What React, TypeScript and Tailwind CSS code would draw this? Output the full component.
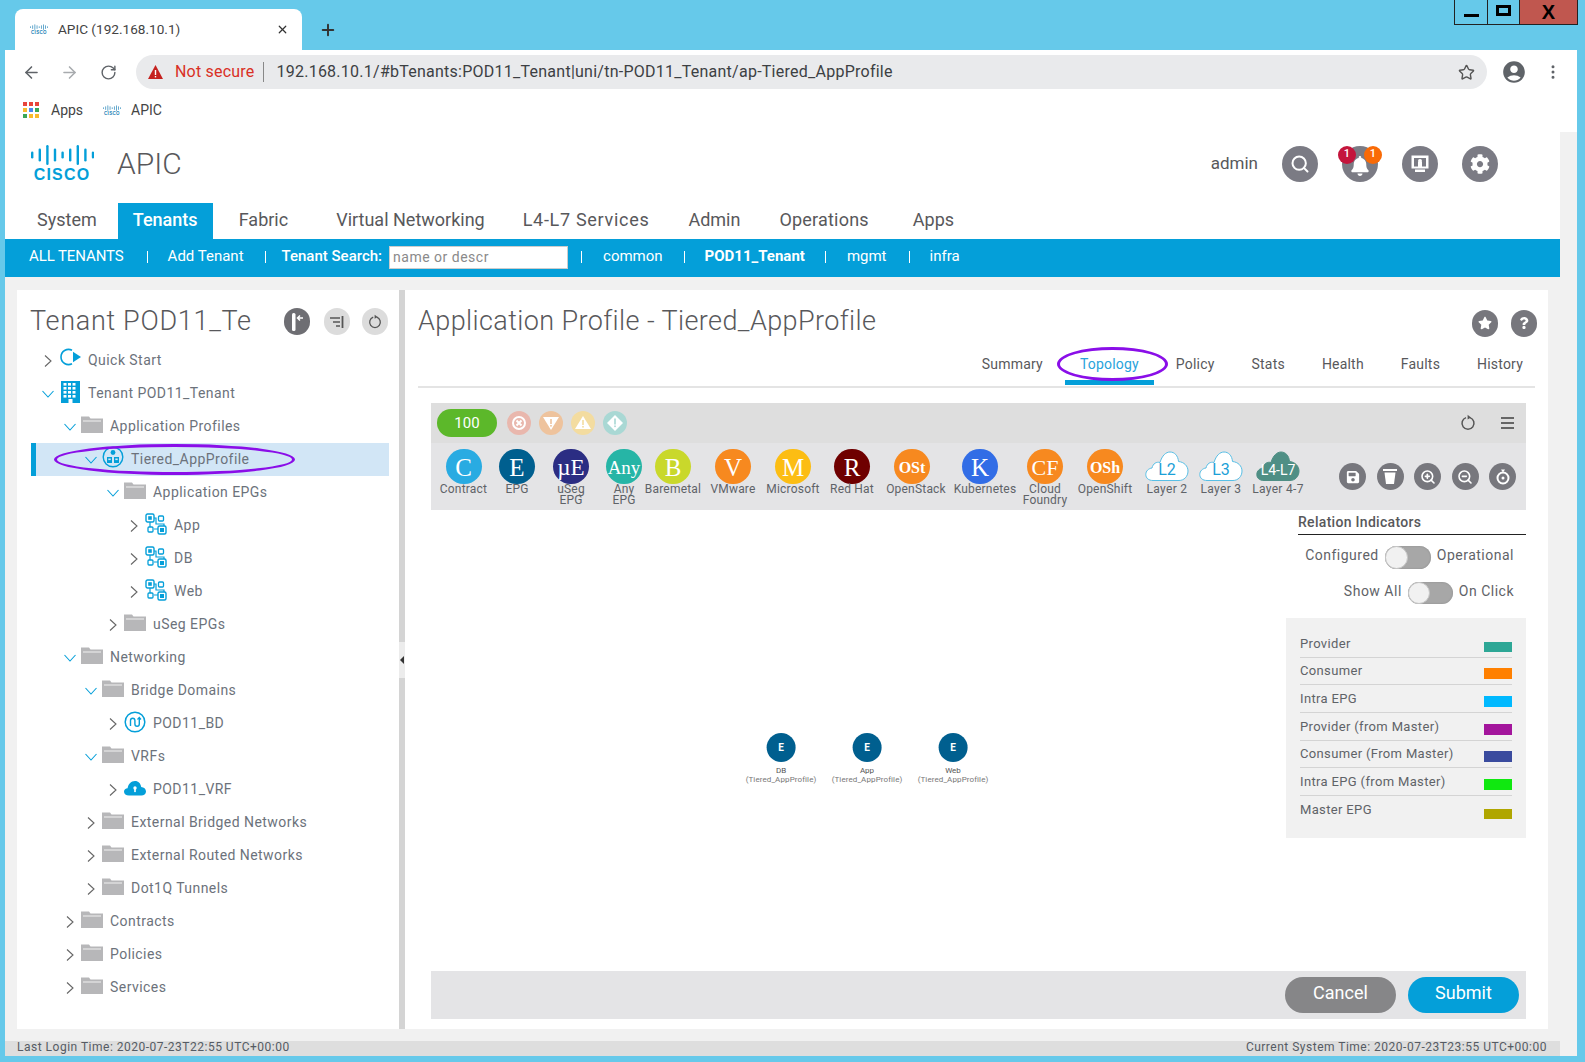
import React from "react";
import { ArrowLeft, ArrowRight, RotateCw, Star, EllipsisVertical, Plus, X, Search, ZoomIn, ZoomOut } from "lucide-react";
import { FaCog, FaBell, FaSave, FaStar, FaQuestion } from "react-icons/fa";
import { MdAccountCircle } from "react-icons/md";

const BARS = [7, 13, 20, 13, 7, 13, 20, 13, 7];

function CiscoMark({ w, h, color }: { w: number; h: number; color: string }) {
  return (
    <svg width={w} height={h} viewBox="0 0 64 37">
      {BARS.map((b, i) => (
        <rect key={i} x={i * 7.6 + 1} y={10 - b / 2} width="2.4" height={b} rx="1.2" fill={color} />
      ))}
      <text x="32" y="35" textAnchor="middle" fontFamily="Liberation Sans, sans-serif" fontWeight="700" fontSize="16" letterSpacing="1.2" fill={color}>
        CISCO
      </text>
    </svg>
  );
}

function Refresh({ size = 18, color = "#555" }: { size?: number; color?: string }) {
  return (
    <svg width={size} height={size} viewBox="0 0 18 18" fill="none">
      <path d="M7 3.6A6 6 0 1 0 11 3.6" stroke={color} strokeWidth="1.5" />
      <path d="M8.6 0.8 L12 3.4 L8.6 5.4Z" fill={color} />
    </svg>
  );
}

function Folder() {
  return (
    <svg width="22" height="17" viewBox="0 0 22 17" className="mb-1">
      <path d="M0 0.5H8L9.5 2.5H22V17H0Z" fill="#b7b7b9" />
      <rect x="2" y="4.5" width="18" height="1" fill="#f2f2f2" />
    </svg>
  );
}

function EpgIcon() {
  return (
    <svg width="22" height="22" viewBox="0 0 22 22" fill="none" className="mb-1">
      <rect x="1" y="1" width="8" height="8" rx="1.5" stroke="#049fd9" strokeWidth="1.4" />
      <rect x="3.2" y="3.2" width="3.6" height="3.6" fill="#049fd9" />
      <rect x="13.5" y="3" width="5" height="5" rx="1" stroke="#049fd9" strokeWidth="1.3" />
      <rect x="3" y="14" width="5" height="5" rx="1" stroke="#049fd9" strokeWidth="1.3" />
      <rect x="13" y="13" width="8" height="8" rx="1.5" stroke="#049fd9" strokeWidth="1.4" />
      <rect x="15" y="15" width="4" height="4" fill="#049fd9" />
      <path d="M9 5H11V11H19V13M5 9V14M9 16H13" stroke="#049fd9" strokeWidth="1.2" />
    </svg>
  );
}

function AppProfileIcon() {
  return (
    <svg width="22" height="22" viewBox="0 0 22 22" fill="none" className="mb-[6px]">
      <circle cx="11" cy="11" r="9.8" stroke="#049fd9" strokeWidth="1.4" />
      <circle cx="11" cy="6.5" r="2.4" fill="#049fd9" />
      <rect x="5" y="11" width="5" height="6" fill="#049fd9" />
      <rect x="12" y="11" width="5" height="6" fill="#049fd9" />
      <rect x="6.3" y="12.5" width="2.4" height="1.6" fill="#d2e6f6" />
      <rect x="13.3" y="12.5" width="2.4" height="1.6" fill="#d2e6f6" />
    </svg>
  );
}

function BdIcon() {
  return (
    <svg width="22" height="22" viewBox="0 0 22 22" fill="none" className="mb-1">
      <circle cx="11" cy="11" r="9.8" stroke="#049fd9" strokeWidth="1.5" />
      <path d="M6.5 15V9.5a2.2 2.2 0 0 1 4.4 0V13a2.2 2.2 0 0 0 4.4 0V7" stroke="#049fd9" strokeWidth="1.4" />
      <path d="M13.5 8.5L15.3 6.5L17 8.5" stroke="#049fd9" strokeWidth="1.2" />
    </svg>
  );
}

function VrfIcon() {
  return (
    <svg width="22" height="16" viewBox="0 0 22 16" className="mb-1">
      <path d="M5 15.5C2 15.5 0 14 0 11.8 0 9.8 1.6 8.4 3.6 8.3 4 4.5 7 1 11 1c3.4 0 5.8 2.6 6.2 6 2.6.2 4.8 1.8 4.8 4.4 0 2.6-2.2 4.1-4.6 4.1Z" fill="#049fd9" />
      <circle cx="11" cy="8" r="1.7" fill="#fff" />
      <rect x="10.2" y="8.5" width="1.6" height="3.6" fill="#fff" />
    </svg>
  );
}

function TenantIcon() {
  return (
    <svg width="19" height="22" viewBox="0 0 19 22" className="mb-1 ml-[2px]">
      <rect width="19" height="22" fill="#049fd9" />
      {[2.5, 7, 11.5].map((x) =>
        [2, 6, 10, 14].map((y) => <rect key={`${x}-${y}`} x={x} y={y} width="3" height="2.6" fill="#fff" />)
      )}
      <rect x="7.5" y="18" width="4" height="4" fill="#fff" />
    </svg>
  );
}

function QuickIcon() {
  return (
    <svg width="22" height="18" viewBox="0 0 22 18" fill="none" className="mb-[7px]">
      <path d="M13 2.2A7.6 7.6 0 1 0 13 15.8" stroke="#049fd9" strokeWidth="1.6" />
      <path d="M14 3.8L22 9L14 14.2Z" fill="#049fd9" />
    </svg>
  );
}

const ICONS: Record<string, React.ReactNode> = {
  folder: <Folder />,
  epg: <EpgIcon />,
  ap: <AppProfileIcon />,
  bd: <BdIcon />,
  vrf: <VrfIcon />,
  tenant: <TenantIcon />,
  quick: <QuickIcon />,
};

const TREE: { label: string; pad: string; open: boolean; icon: string; selected?: boolean }[] = [
  { label: "Quick Start", pad: "pl-[11px]", open: false, icon: "quick" },
  { label: "Tenant POD11_Tenant", pad: "pl-[11px]", open: true, icon: "tenant" },
  { label: "Application Profiles", pad: "pl-[33px]", open: true, icon: "folder" },
  { label: "Tiered_AppProfile", pad: "pl-[49px]", open: true, icon: "ap", selected: true },
  { label: "Application EPGs", pad: "pl-[76px]", open: true, icon: "folder" },
  { label: "App", pad: "pl-[97px]", open: false, icon: "epg" },
  { label: "DB", pad: "pl-[97px]", open: false, icon: "epg" },
  { label: "Web", pad: "pl-[97px]", open: false, icon: "epg" },
  { label: "uSeg EPGs", pad: "pl-[76px]", open: false, icon: "folder" },
  { label: "Networking", pad: "pl-[33px]", open: true, icon: "folder" },
  { label: "Bridge Domains", pad: "pl-[54px]", open: true, icon: "folder" },
  { label: "POD11_BD", pad: "pl-[76px]", open: false, icon: "bd" },
  { label: "VRFs", pad: "pl-[54px]", open: true, icon: "folder" },
  { label: "POD11_VRF", pad: "pl-[76px]", open: false, icon: "vrf" },
  { label: "External Bridged Networks", pad: "pl-[54px]", open: false, icon: "folder" },
  { label: "External Routed Networks", pad: "pl-[54px]", open: false, icon: "folder" },
  { label: "Dot1Q Tunnels", pad: "pl-[54px]", open: false, icon: "folder" },
  { label: "Contracts", pad: "pl-[33px]", open: false, icon: "folder" },
  { label: "Policies", pad: "pl-[33px]", open: false, icon: "folder" },
  { label: "Services", pad: "pl-[33px]", open: false, icon: "folder" },
];

function Chevron({ open }: { open: boolean }) {
  return open ? (
    <svg width="12" height="12" viewBox="0 0 12 12" fill="none">
      <path d="M0.5 3L6 9L11.5 3" stroke="#049fd9" strokeWidth="1.1" />
    </svg>
  ) : (
    <svg width="12" height="12" viewBox="0 0 12 12" fill="none">
      <path d="M3 0.5L9 6L3 11.5" stroke="#666" strokeWidth="1.1" />
    </svg>
  );
}

const PALETTE: { t: string; label: string[]; box: string; bg: string; text: string; lab?: string }[] = [
  { t: "C", label: ["Contract"], box: "w-[65px]", bg: "bg-[#29abe2]", text: "text-[25px]" },
  { t: "E", label: ["EPG"], box: "w-[42px]", bg: "bg-[#005f8f]", text: "text-[25px]" },
  { t: "µE", label: ["uSeg", "EPG"], box: "w-[66px]", bg: "bg-[#2b2d83]", text: "text-[23px]" },
  { t: "Any", label: ["Any", "EPG"], box: "w-[40px]", bg: "bg-[#26b5a6]", text: "text-[19px]" },
  { t: "B", label: ["Baremetal"], box: "w-[58px]", bg: "bg-[#c9d82b]", text: "text-[25px]" },
  { t: "V", label: ["VMware"], box: "w-[62px]", bg: "bg-[#f7891f]", text: "text-[25px]" },
  { t: "M", label: ["Microsoft"], box: "w-[58px]", bg: "bg-[#fcbd13]", text: "text-[25px]" },
  { t: "R", label: ["Red Hat"], box: "w-[60px]", bg: "bg-[#6f0000]", text: "text-[25px]" },
  { t: "OSt", label: ["OpenStack"], box: "w-[60px]", bg: "bg-[#f7891f]", text: "text-[16px] font-bold", lab: "ml-2" },
  { t: "K", label: ["Kubernetes"], box: "w-[76px]", bg: "bg-[#326de6]", text: "text-[25px]", lab: "ml-[10px]" },
  { t: "CF", label: ["Cloud", "Foundry"], box: "w-[54px]", bg: "bg-[#f7891f]", text: "text-[22px]" },
  { t: "OSh", label: ["OpenShift"], box: "w-[66px]", bg: "bg-[#f7891f]", text: "text-[16px] font-bold" },
];

function Cloud({ t, filled }: { t: string; filled?: boolean }) {
  return (
    <div className="relative w-[44px] h-[35px]">
      <svg width="44" height="31" viewBox="0 0 44 31" className="mt-[2px]">
        <path
          d="M8 29.5C3.5 29.5 .8 27 .8 23.5 .8 20 3.5 17.5 7 17c1-4.5 4.5-6.5 8-5.5C17 4.5 21 1 25 1c4.5 0 8 3.5 8.5 9.5 5.5.5 9.5 4.5 9.5 9.5 0 5.500-4 9.500-9 9.500Z"
          fill={filled ? "#4f8f85" : "#fff"}
          stroke={filled ? "#4f8f85" : "#58bfe6"}
          strokeWidth="1"
        />
      </svg>
      <span className={`absolute inset-x-0 bottom-[4px] text-center leading-[20px] whitespace-nowrap ${filled ? "text-[14px] text-white" : "text-[16px] text-[#1ba0d7]"}`}>
        {t}
      </span>
    </div>
  );
}

const LEGEND: [string, string, string][] = [
  ["Provider", "bg-[#2ea796]", "h-[10px]"],
  ["Consumer", "bg-[#ff8000]", "h-[11px]"],
  ["Intra EPG", "bg-[#00b9ff]", "h-[11px]"],
  ["Provider (from Master)", "bg-[#a3159c]", "h-[11px]"],
  ["Consumer (From Master)", "bg-[#3a4b9e]", "h-[11px]"],
  ["Intra EPG (from Master)", "bg-[#10e810]", "h-[11px]"],
  ["Master EPG", "bg-[#b0a600]", "h-[10px]"],
];

function Toggle({ wide }: { wide?: boolean }) {
  return (
    <span className={`flex items-center rounded-full bg-[#a7a7a7] shadow-[inset_0_0_2px_#888] ${wide ? "w-[46px] h-[23px]" : "w-[45px] h-[22px]"}`}>
      <span className={`rounded-full bg-[#f1f1f1] border border-[#c6c6c6] ${wide ? "w-[23px] h-[23px]" : "w-[22px] h-[22px]"}`} />
    </span>
  );
}

function Node({ name, pos }: { name: string; pos: string }) {
  return (
    <div className={`absolute top-[223px] -translate-x-1/2 flex flex-col items-center ${pos}`}>
      <span className="w-[29px] h-[29px] rounded-full bg-[#005f8f] text-white flex items-center justify-center text-[10px] font-bold">E</span>
      <span className="text-[8px] leading-[9px] text-[#555] mt-[4px]">{name}</span>
      <span className="text-[8px] leading-[9px] text-[#777] tracking-[0.1px] whitespace-nowrap">(Tiered_AppProfile)</span>
    </div>
  );
}

function Sep({ m }: { m: string }) {
  return <span className={`w-px h-[12px] mt-[2px] bg-white ${m}`} />;
}

export default function App() {
  const font = { fontFamily: "Roboto, 'Liberation Sans', sans-serif" };
  return (
    <div className="w-[1585px] h-[1062px] bg-[#66c9ea] overflow-hidden flex flex-col pb-[6px]" style={font}>
      {/* window tabs */}
      <div className="h-[50px] shrink-0 flex items-start pl-[15px]">
        <div className="mt-[9px] w-[287px] h-[41px] bg-white rounded-t-lg flex items-center pl-[15px] pr-[13px]">
          <CiscoMark w={18} h={15} color="#1b7fb5" />
          <span className="ml-[10px] text-[13.6px] text-[#444]">APIC (192.168.10.1)</span>
          <X size={13} strokeWidth={2.2} className="ml-auto text-[#333]" />
        </div>
        <Plus size={18} strokeWidth={2.6} className="mt-[21px] ml-[17px] text-[#333]" />
        <div className="ml-auto mr-[7px] flex h-[25px] border border-t-0 border-[#222]">
          <span className="w-[33px] border-r border-[#222] flex items-end justify-center pb-[7px]"><span className="w-[15px] h-[3px] bg-black" /></span>
          <span className="w-[32px] border-r border-[#222] flex items-start justify-center pt-[5px]"><span className="w-[15px] h-[11px] border-[3px] border-black" /></span>
          <span className="w-[57px] bg-[#c0574f] flex items-center justify-center text-[20px] font-bold text-black" style={{ fontFamily: "Liberation Sans, sans-serif" }}>X</span>
        </div>
      </div>

      <div className="flex-1 ml-[5px] mr-[8px] bg-white flex flex-col min-h-0">
        {/* address bar */}
        <div className="h-[44px] shrink-0 flex items-center text-[#5f6368]">
          <ArrowLeft size={19} className="ml-[17px]" />
          <ArrowRight size={19} className="ml-[19px] text-[#a8abae]" />
          <RotateCw size={17} className="ml-[21px]" />
          <div className="ml-[19px] w-[1351px] h-[34px] rounded-full bg-[#e9eaec] flex items-center pl-[12px] pr-[12px]">
            <svg width="15" height="14" viewBox="0 0 15 14"><path d="M7.500 0L15 14H0Z" fill="#c5221f" /><rect x="6.800" y="5" width="1.400" height="5" fill="#fff" /><rect x="6.800" y="11" width="1.400" height="1.400" fill="#fff" /></svg>
            <span className="ml-[12px] mb-[1px] text-[16px] tracking-[0.2px] text-[#d93025]">Not secure</span>
            <span className="ml-[9px] w-px h-[20px] bg-[#888]" />
            <span className="ml-[12px] mb-[1px] text-[16px] tracking-[0.25px] text-[#3c4043] whitespace-nowrap">192.168.10.1/#bTenants:POD11_Tenant|uni/tn-POD11_Tenant/ap-Tiered_AppProfile</span>
            <Star size={17} strokeWidth={2} className="ml-auto text-[#555]" />
          </div>
          <MdAccountCircle size={26} className="ml-[14px] text-[#5f6368]" />
          <EllipsisVertical size={18} className="ml-[17px]" />
        </div>
        {/* bookmarks */}
        <div className="h-[34px] shrink-0 flex items-center pl-[18px] pb-[2px] text-[14px] text-[#444]">
          <svg width="16" height="16" viewBox="0 0 16 16">
            {["#e8453c", "#e8453c", "#e8453c", "#f9bb2d", "#4a89f3", "#3aa757", "#3aa757", "#f9bb2d", "#f9bb2d"].map((c, i) => (
              <rect key={i} x={(i % 3) * 6} y={Math.floor(i / 3) * 6} width="4" height="4" fill={c} />
            ))}
          </svg>
          <span className="ml-[12px]">Apps</span>
          <span className="ml-[20px]"><CiscoMark w={18} h={15} color="#1b7fb5" /></span>
          <span className="ml-[10px]">APIC</span>
        </div>

        <div className="flex-1 flex min-h-0">
          <div className="w-[1555px] flex flex-col">
            {/* app header */}
            <div className="h-[75px] shrink-0 flex items-center pl-[25px] pb-[4px]">
              <CiscoMark w={64} h={37} color="#049fd9" />
              <span className="ml-[23px] text-[30px] font-light text-[#58585b]">APIC</span>
              <span className="ml-auto text-[17px] text-[#58585b]">admin</span>
              <span className="ml-[24px] w-[36px] h-[36px] rounded-full bg-[#7b7b84] flex items-center justify-center text-white"><Search size={20} strokeWidth={2.4} /></span>
              <span className="relative ml-[24px] w-[36px] h-[36px] rounded-full bg-[#7b7b84] flex items-center justify-center text-white">
                <FaBell size={20} className="mt-1" />
                <span className="absolute -left-[4px] top-0 w-[18px] h-[18px] rounded-full bg-[#c4153c] text-[11px] font-medium flex items-center justify-center">1</span>
                <span className="absolute -right-[4px] top-0 w-[18px] h-[18px] rounded-full bg-[#f96a06] text-[11px] font-medium flex items-center justify-center">1</span>
              </span>
              <span className="ml-[24px] w-[36px] h-[36px] rounded-full bg-[#7b7b84] flex items-center justify-center">
                <svg width="18" height="18" viewBox="0 0 18 18"><rect x="0.500" y="0.500" width="17" height="13" fill="#fff" /><rect x="3" y="3" width="12" height="8.500" fill="#7b7b84" /><circle cx="9" cy="6" r="2" fill="#fff" /><rect x="7" y="7" width="4" height="5" fill="#fff" /><rect x="4" y="14.500" width="10" height="2.500" fill="#fff" /></svg>
              </span>
              <span className="ml-[24px] mr-[62px] w-[36px] h-[36px] rounded-full bg-[#7b7b84] flex items-center justify-center text-white"><FaCog size={20} /></span>
            </div>
            {/* main nav */}
            <div className="h-[36px] shrink-0 flex items-stretch text-[18px] text-[#58585b]">
              <span className="ml-[32px] flex items-center pb-[4px]">System</span>
              <span className="ml-[21px] w-[95px] bg-[#049fd9] text-white font-medium flex items-center justify-center pb-[4px]">Tenants</span>
              <span className="ml-[26px] flex items-center pb-[4px]">Fabric</span>
              <span className="ml-[48px] flex items-center pb-[4px]">Virtual Networking</span>
              <span className="ml-[38px] flex items-center pb-[4px] tracking-[0.7px]">L4-L7 Services</span>
              <span className="ml-[39px] flex items-center pb-[4px]">Admin</span>
              <span className="ml-[39px] flex items-center pb-[4px] tracking-[0.2px]">Operations</span>
              <span className="ml-[44px] flex items-center pb-[4px]">Apps</span>
            </div>
            {/* sub nav */}
            <div className="h-[38px] shrink-0 bg-[#049fd9] flex items-center pb-[4px] text-[15px] text-white">
              <span className="ml-[24px] tracking-[-0.1px]">ALL TENANTS</span>
              <Sep m="ml-[23px]" />
              <span className="ml-[20px]">Add Tenant</span>
              <Sep m="ml-[21px]" />
              <span className="ml-[16px] font-medium">Tenant Search:</span>
              <span className="ml-[7px] mt-[3px] w-[179px] h-[23px] bg-white border border-[#ccc] pl-[3px] text-[14px] text-[#8a8a8a] flex items-center tracking-[0.5px]">name or descr</span>
              <Sep m="ml-[13px]" />
              <span className="ml-[21px]">common</span>
              <Sep m="ml-[21px]" />
              <span className="ml-[20px] font-bold">POD11_Tenant</span>
              <Sep m="ml-[20px]" />
              <span className="ml-[21px]">mgmt</span>
              <Sep m="ml-[22px]" />
              <span className="ml-[20px]">infra</span>
            </div>
            {/* content */}
            <div className="flex-1 min-h-0 bg-[#f1f1f1] pt-[13px] pb-[12px] pl-[12px] pr-[12px] flex">
              <div className="w-[382px] bg-white flex flex-col">
                <div className="h-[54px] shrink-0 flex items-center pt-[9px] pl-[13px] pr-[11px]">
                  <span className="text-[27px] font-light text-[#58585b] tracking-[0.7px]">Tenant POD11_Te</span>
                  <span className="ml-auto w-[26px] h-[27px] rounded-full bg-[#6e6e73] flex items-center justify-center">
                    <svg width="16" height="20" viewBox="0 0 16 20" fill="none"><rect x="3" y="1" width="3.500" height="18" rx="1.500" fill="#fff" /><path d="M14 6H9M11 3.500L8.500 6L11 8.500" stroke="#fff" strokeWidth="1.500" /></svg>
                  </span>
                  <span className="ml-[14px] w-[26px] h-[27px] rounded-full bg-[#dcdcdc] flex items-center justify-center">
                    <svg width="16" height="14" viewBox="0 0 16 14" fill="none"><path d="M1 3H11M4 7H11M7 11H11" stroke="#555" strokeWidth="1.300" /><path d="M13.500 1V13" stroke="#555" strokeWidth="1.800" /></svg>
                  </span>
                  <span className="ml-[12px] w-[26px] h-[27px] rounded-full bg-[#dcdcdc] flex items-center justify-center"><Refresh size={16} /></span>
                </div>
                <div className="ml-[14px] w-[358px] flex flex-col">
                  {TREE.map((r) => (
                    <div key={r.label} className={`relative h-[33px] flex items-center ${r.pad} ${r.selected ? "bg-[#d2e6f6] border-l-[5px] border-[#049fd9]" : ""}`}>
                      <span className="w-[17px] flex"><Chevron open={r.open} /></span>
                      <span className="w-[29px] flex">{ICONS[r.icon]}</span>
                      <span className="text-[14px] text-[#6c727b] tracking-[0.45px] whitespace-nowrap">{r.label}</span>
                      {r.selected && (
                        <span className="absolute left-[18px] top-[1px] w-[241px] h-[31px] rounded-[50%] border-[3px] border-[#8a0ee8]" />
                      )}
                    </div>
                  ))}
                </div>
              </div>
              {/* divider */}
              <div className="w-[6px] bg-[#d4d4d4] flex flex-col items-center justify-center">
                <span className="w-full h-[36px] bg-[#ececec] flex items-center justify-center">
                  <span className="w-0 h-0 border-y-[4px] border-y-transparent border-r-[4px] border-r-[#333]" />
                </span>
              </div>
              <div className="flex-1 bg-white flex flex-col min-w-0">
                <div className="h-[62px] shrink-0 flex items-center pl-[13px] pr-[11px]">
                  <span className="text-[27px] font-light text-[#58585b] tracking-[0.4px]">Application Profile - Tiered_AppProfile</span>
                  <span className="ml-auto mt-[4px] w-[26px] h-[27px] rounded-full bg-[#77777d] flex items-center justify-center text-white"><FaStar size={14} /></span>
                  <span className="ml-[13px] mt-[4px] w-[26px] h-[27px] rounded-full bg-[#77777d] flex items-center justify-center text-white"><FaQuestion size={12} /></span>
                </div>
                <div className="mx-[13px] h-[36px] shrink-0 border-b-2 border-[#e4e4e4] flex items-start justify-end gap-[37px] pr-[12px] pt-[2px] text-[14px] tracking-[0.2px] text-[#58585b]">
                  <span>Summary</span>
                  <span className="relative text-[#29a3dc]">
                    Topology
                    <span className="absolute -left-[15px] -right-[15px] top-[26px] h-[5px] bg-[#049fd9]" />
                    <span className="absolute -left-[23px] -right-[29px] -top-[7px] h-[34px] rounded-[50%] border-[3px] border-[#8a0ee8]" />
                  </span>
                  <span>Policy</span>
                  <span>Stats</span>
                  <span>Health</span>
                  <span>Faults</span>
                  <span>History</span>
                </div>
                <div className="h-[15px] shrink-0" />
                <div className="ml-[26px] mr-[22px] flex-1 min-h-0 flex flex-col">
                  <div className="h-[40px] shrink-0 bg-[#dedede] flex items-center pl-[6px] pr-[12px]">
                    <span className="w-[60px] h-[28px] rounded-full bg-[#5cb82a] text-white text-[15px] flex items-center justify-center">100</span>
                    <span className="ml-[10px] w-[24px] h-[24px] rounded-full bg-[#e9b7ad] flex items-center justify-center">
                      <svg width="14" height="14" viewBox="0 0 14 14" fill="none"><circle cx="7" cy="7" r="6" stroke="#fff" strokeWidth="2" /><path d="M4.500 4.500L9.500 9.500M9.500 4.500L4.500 9.500" stroke="#fff" strokeWidth="2" /></svg>
                    </span>
                    <span className="ml-[8px] w-[24px] h-[24px] rounded-full bg-[#eec39d] flex items-center justify-center">
                      <svg width="16" height="14" viewBox="0 0 16 14"><path d="M0 1H16L8 14Z" fill="#fff" /><rect x="7.200" y="3" width="1.600" height="5" fill="#eec39d" /><rect x="7.200" y="9" width="1.600" height="1.600" fill="#eec39d" /></svg>
                    </span>
                    <span className="ml-[8px] w-[24px] h-[24px] rounded-full bg-[#f3dca0] flex items-center justify-center">
                      <svg width="16" height="14" viewBox="0 0 16 14"><path d="M8 0L16 13H0Z" fill="#fff" /><rect x="7.200" y="4" width="1.600" height="5" fill="#f3dca0" /><rect x="7.200" y="10" width="1.600" height="1.600" fill="#f3dca0" /></svg>
                    </span>
                    <span className="ml-[8px] w-[24px] h-[24px] rounded-full bg-[#a9d8d4] flex items-center justify-center">
                      <svg width="16" height="16" viewBox="0 0 16 16"><path d="M8 0L16 8L8 16L0 8Z" fill="#fff" /><rect x="7.200" y="3.500" width="1.600" height="6" fill="#a9d8d4" /><rect x="7.200" y="10.500" width="1.600" height="1.600" fill="#a9d8d4" /></svg>
                    </span>
                    <span className="ml-auto"><Refresh size={18} color="#555" /></span>
                    <span className="ml-[24px] flex flex-col gap-[3.500px]">
                      <span className="w-[13px] h-[1.500px] bg-[#666]" />
                      <span className="w-[13px] h-[1.500px] bg-[#666]" />
                      <span className="w-[13px] h-[1.500px] bg-[#666]" />
                    </span>
                  </div>
                  <div className="h-[67px] shrink-0 bg-[#e4e4e6] flex items-start pt-[6px]">
                    {PALETTE.map((p) => (
                      <div key={p.t} className={`${p.box} shrink-0 flex flex-col items-center`}>
                        <span className={`w-[36px] h-[35px] pt-[2px] rounded-full ${p.bg} ${p.text} text-white flex items-center justify-center whitespace-nowrap leading-none`} style={{ fontFamily: "'Liberation Serif', serif" }}>
                          {p.t}
                        </span>
                        <div className={`mt-[-1px] flex flex-col items-center text-[12px] leading-[11px] text-[#5f6368] pt-[1px] tracking-[0.2px] whitespace-nowrap ${p.lab ?? ""}`}>
                          {p.label.map((l) => <span key={l}>{l}</span>)}
                        </div>
                      </div>
                    ))}
                    {[
                      ["L2", "Layer 2", "w-[58px]", false],
                      ["L3", "Layer 3", "w-[50px]", false],
                      ["L4-L7", "Layer 4-7", "w-[64px]", true],
                    ].map(([t, l, w, f]) => (
                      <div key={t as string} className={`${w} shrink-0 flex flex-col items-center`}>
                        <Cloud t={t as string} filled={f as boolean} />
                        <span className="mt-[-1px] pt-[1px] text-[12px] leading-[11px] text-[#5f6368] tracking-[0.3px] whitespace-nowrap">{l as string}</span>
                      </div>
                    ))}
                    <div className="ml-auto mr-[10px] mt-[14px] flex gap-[10.500px] text-white">
                      {[
                        <FaSave size={14} key="s" />,
                        <svg key="t" width="14" height="15" viewBox="0 0 14 15"><rect x="0" y="0" width="14" height="2" fill="#fff" /><path d="M1.500 3.500H12.500L11 15H3Z" fill="#fff" /></svg>,
                        <ZoomIn size={16} strokeWidth={2.4} key="i" />,
                        <ZoomOut size={16} strokeWidth={2.4} key="o" />,
                        <svg key="r" width="16" height="16" viewBox="0 0 16 16" fill="none"><circle cx="8" cy="9" r="5.500" stroke="#fff" strokeWidth="2" /><circle cx="8" cy="9" r="1.500" fill="#fff" /><path d="M6 0.500H10L8 3.500Z" fill="#fff" /></svg>,
                      ].map((ic, i) => (
                        <span key={i} className="w-[27px] h-[27px] rounded-full bg-[#77777d] flex items-center justify-center">{ic}</span>
                      ))}
                    </div>
                  </div>
                  {/* canvas */}
                  <div className="relative flex-1 min-h-0 flex justify-end">
                    <Node name="DB" pos="left-[350px]" />
                    <Node name="App" pos="left-[436px]" />
                    <Node name="Web" pos="left-[522px]" />
                    <div className="w-[240px] flex flex-col text-[14px] text-[#5f6368] tracking-[0.5px]">
                      <div className="ml-[12px] h-[25px] border-b border-[#222] flex items-center font-medium text-[#58585b] tracking-[0.3px]">Relation Indicators</div>
                      <div className="mt-[11px] h-[23px] flex items-center justify-end gap-[6px] pr-[12px]">
                        <span className="mb-1">Configured</span><Toggle wide /><span className="mb-1">Operational</span>
                      </div>
                      <div className="mt-[13px] h-[22px] flex items-center justify-end gap-[6px] pr-[12px]">
                        <span className="mb-1">Show All</span><Toggle /><span className="mb-1">On Click</span>
                      </div>
                      <div className="mt-[14px] h-[220px] bg-[#f1f1f1] px-[14px] pt-[12px] text-[13px] tracking-[0.35px] flex flex-col">
                        {LEGEND.map(([n, c, h], i) => (
                          <div key={n} className={`h-[27.700px] flex items-center justify-between ${i < 6 ? "border-b border-[#d4d4d4]" : ""}`}>
                            <span>{n}</span>
                            <span className={`w-[28px] self-end mb-[5px] ${c} ${h}`} />
                          </div>
                        ))}
                      </div>
                    </div>
                  </div>
                  <div className="h-[48px] shrink-0 bg-[#e4e4e6] flex items-center justify-end gap-[12px] pr-[7px] text-[18px] text-white">
                    <span className="w-[111px] h-[36px] pb-[6px] rounded-full bg-[#868688] flex items-center justify-center">Cancel</span>
                    <span className="w-[111px] h-[36px] pb-[6px] rounded-full bg-[#049fd9] flex items-center justify-center">Submit</span>
                  </div>
                  <div className="h-[10px] shrink-0" />
                </div>
              </div>
            </div>
            {/* status bar */}
            <div className="h-[15px] shrink-0 bg-[#dedede] flex items-center justify-between pl-[12px] pr-[13px] pb-[3px] leading-none text-[12px] text-[#555b63] tracking-[0.5px]">
              <span>Last Login Time: 2020-07-23T22:55 UTC+00:00</span>
              <span>Current System Time: 2020-07-23T23:55 UTC+00:00</span>
            </div>
          </div>
          <div className="flex-1 mt-[4px] bg-[#f1f1f1]" />
        </div>
      </div>
    </div>
  );
}
